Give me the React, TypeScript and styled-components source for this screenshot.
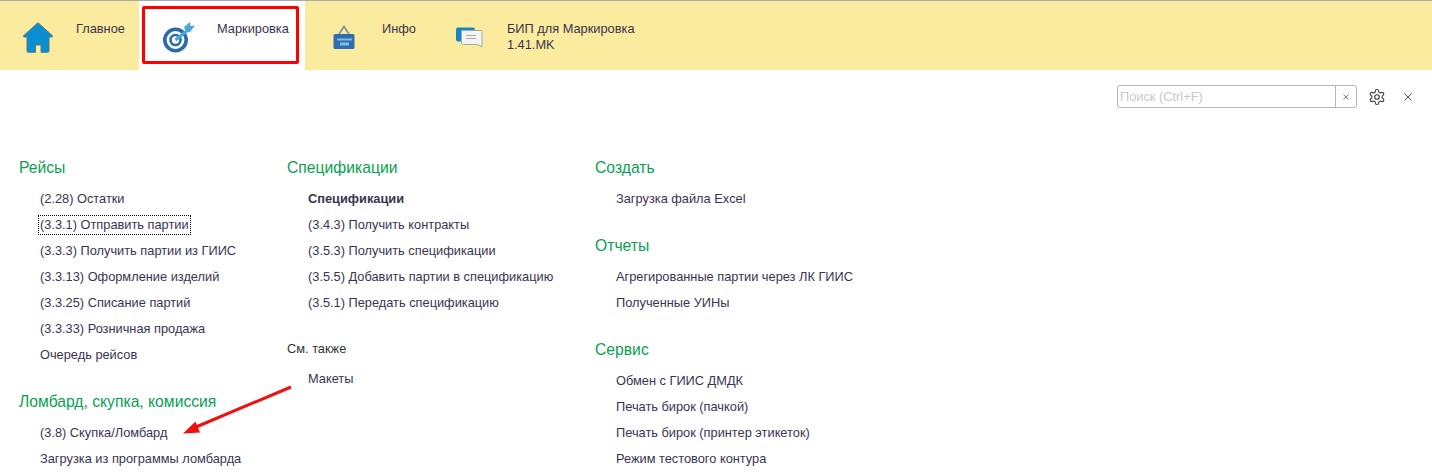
import React from "react";
import styled, { createGlobalStyle } from "styled-components";

const GlobalStyle = createGlobalStyle`
  html, body {
    margin: 0;
    padding: 0;
    background: #fff;
    overflow: hidden;
  }
  body {
    font-family: "Liberation Sans", Arial, sans-serif;
    font-size: 12.8px;
    color: #333;
  }
`;

const columns = [
  {
    width: 268,
    groups: [
      {
        title: "Рейсы",
        items: [
          { text: "(2.28) Остатки" },
          { text: "(3.3.1) Отправить партии", focused: true },
          { text: "(3.3.3) Получить партии из ГИИС" },
          { text: "(3.3.13) Оформление изделий" },
          { text: "(3.3.25) Списание партий" },
          { text: "(3.3.33) Розничная продажа" },
          { text: "Очередь рейсов" },
        ],
      },
      {
        title: "Ломбард, скупка, комиссия",
        items: [{ text: "(3.8) Скупка/Ломбард" }, { text: "Загрузка из программы ломбарда" }],
      },
    ],
  },
  {
    width: 308,
    groups: [
      {
        title: "Спецификации",
        items: [
          { text: "Спецификации", bold: true },
          { text: "(3.4.3) Получить контракты" },
          { text: "(3.5.3) Получить спецификации" },
          { text: "(3.5.5) Добавить партии в спецификацию" },
          { text: "(3.5.1) Передать спецификацию" },
        ],
      },
      { subtitle: "См. также", items: [{ text: "Макеты" }] },
    ],
  },
  {
    width: 400,
    groups: [
      { title: "Создать", items: [{ text: "Загрузка файла Excel" }] },
      {
        title: "Отчеты",
        items: [{ text: "Агрегированные партии через ЛК ГИИС" }, { text: "Полученные УИНы" }],
      },
      {
        title: "Сервис",
        items: [
          { text: "Обмен с ГИИС ДМДК" },
          { text: "Печать бирок (пачкой)" },
          { text: "Печать бирок (принтер этикеток)" },
          { text: "Режим тестового контура" },
        ],
      },
    ],
  },
];

function HomeIcon() {
  return (
    <svg width="30" height="31" viewBox="0 0 30 31">
      <path
        d="M15 0.7 L29.3 13.6 V15 H26 V29 Q26 30.3 24.6 30.3 H18 V23 H12.5 V30.3 H5.4 Q4 30.3 4 29 V15 H0.7 V13.6 Z"
        fill="#0a8ed0"
        stroke="#4f7d8c"
        strokeWidth="1"
        strokeLinejoin="round"
      />
    </svg>
  );
}

function TargetIcon() {
  return (
    <svg width="34" height="31" viewBox="0 0 34 31">
      <circle cx="13.5" cy="18" r="10.7" fill="#fff" stroke="#2d6aa8" strokeWidth="3.6" />
      <circle cx="13.5" cy="18" r="5" fill="#fff" stroke="#2d6aa8" strokeWidth="2.6" />
      <path d="M13.5 18 L26 8" stroke="#4aa8d8" strokeWidth="3" />
      <path d="M22 5 L28 0 L28.5 4 L33 3.5 L28 10 L24 10 Z" fill="#4aa8d8" />
    </svg>
  );
}

function BagIcon() {
  return (
    <svg width="22" height="24" viewBox="0 0 22 24">
      <path d="M6 9 L11 1.5 L16 9" fill="none" stroke="#7f8c9c" strokeWidth="1.6" />
      <rect x="0.5" y="9" width="21" height="15" rx="1.5" fill="#2f6cb0" />
      <rect x="4" y="13.5" width="15" height="2" fill="#7ec0e0" />
      <rect x="7" y="17.5" width="9" height="3" fill="#7ec0e0" />
    </svg>
  );
}

function ChatIcon() {
  return (
    <svg width="28" height="21" viewBox="0 0 28 21">
      <rect x="1" y="0.5" width="19" height="14" rx="2" fill="#1585c8" />
      <path
        d="M7.5 3.5 H26 Q27 3.5 27 4.5 V20 L23 17.5 H7.5 Q6.5 17.5 6.5 16.5 V4.5 Q6.5 3.5 7.5 3.5 Z"
        fill="#f4f4f2"
        stroke="#a9a9a0"
        strokeWidth="1"
      />
      <path d="M11 8.5 H21 M11 11.5 H21" stroke="#a9a9a9" strokeWidth="1.2" />
    </svg>
  );
}

function GearIcon() {
  return (
    <svg width="18" height="18" viewBox="0 0 24 24" fill="none" stroke="#444" strokeWidth="1.6" strokeLinejoin="round">
      <path d="M12.2 2h-.4a2 2 0 0 0-2 2v.2a2 2 0 0 1-1 1.7l-.4.3a2 2 0 0 1-2 0l-.2-.1a2 2 0 0 0-2.7.7l-.2.4a2 2 0 0 0 .7 2.7l.2.1a2 2 0 0 1 1 1.7v.5a2 2 0 0 1-1 1.8l-.2.1a2 2 0 0 0-.7 2.7l.2.4a2 2 0 0 0 2.7.7l.2-.1a2 2 0 0 1 2 0l.4.3a2 2 0 0 1 1 1.7v.2a2 2 0 0 0 2 2h.4a2 2 0 0 0 2-2v-.2a2 2 0 0 1 1-1.7l.4-.3a2 2 0 0 1 2 0l.2.1a2 2 0 0 0 2.7-.7l.2-.4a2 2 0 0 0-.7-2.7l-.2-.1a2 2 0 0 1-1-1.8v-.5a2 2 0 0 1 1-1.7l.2-.1a2 2 0 0 0 .7-2.7l-.2-.4a2 2 0 0 0-2.7-.7l-.2.1a2 2 0 0 1-2 0l-.4-.3a2 2 0 0 1-1-1.7V4a2 2 0 0 0-2-2z" />
      <circle cx="12" cy="12" r="3" />
    </svg>
  );
}

function CloseIcon({ size }: { size: number }) {
  return (
    <svg width={size} height={size} viewBox="0 0 8 8" stroke="#555" strokeWidth="1" fill="none">
      <path d="M0.5 0.5 L7.5 7.5 M7.5 0.5 L0.5 7.5" />
    </svg>
  );
}

export default function App() {
  return (
    <>
      <GlobalStyle />
      <Page>
        <TopBar>
          <Tab $width={139} $pad={23} $gap={23}>
            <TabIcon $top={1}>
              <HomeIcon />
            </TabIcon>
            <TabLabel>Главное</TabLabel>
          </Tab>
          <ActiveTab $width={166} $pad={23} $gap={21}>
            <TabIcon $top={1}>
              <TargetIcon />
            </TabIcon>
            <TabLabel>Маркировка</TabLabel>
            <Highlight />
          </ActiveTab>
          <Tab $pad={28} $gap={27}>
            <TabIcon $top={4}>
              <BagIcon />
            </TabIcon>
            <TabLabel>Инфо</TabLabel>
          </Tab>
          <Tab $pad={39} $gap={24}>
            <TabIcon $top={6}>
              <ChatIcon />
            </TabIcon>
            <TabLabel>
              БИП для Маркировка
              <br />
              1.41.MK
            </TabLabel>
          </Tab>
        </TopBar>
        <Tools>
          <SearchBox>
            <SearchText>Поиск (Ctrl+F)</SearchText>
            <SearchClear>
              <CloseIcon size={6} />
            </SearchClear>
          </SearchBox>
          <GearIcon />
          <WindowClose>
            <CloseIcon size={8} />
          </WindowClose>
        </Tools>
        <Columns>
          {columns.map((col, i) => (
            <Column key={i} $width={col.width}>
              {col.groups.map((g, j) => (
                <Group key={j}>
                  {g.title && <GroupTitle>{g.title}</GroupTitle>}
                  {g.subtitle && <SubTitle>{g.subtitle}</SubTitle>}
                  {g.items.map((it, k) => (
                    <Item key={k} $bold={"bold" in it && it.bold}>
                      {"focused" in it && it.focused ? <FocusedText>{it.text}</FocusedText> : it.text}
                    </Item>
                  ))}
                </Group>
              ))}
            </Column>
          ))}
        </Columns>
        <Arrow width="125" height="60" viewBox="0 0 125 60">
          <path d="M119 3 L24 43" stroke="#f01010" strokeWidth="3" />
          <path d="M11 49.5 L23.5 37.5 L28 48.5 Z" fill="#f01010" />
        </Arrow>
      </Page>
    </>
  );
}

const Page = styled.div`
  position: relative;
  width: 1432px;
  height: 475px;
  overflow: hidden;
  background: #fff;
`;

const TopBar = styled.div`
  display: flex;
  height: 69px;
  background: #fbeb9e;
  border-top: 1px solid #a9a9a9;
`;

const Tab = styled.div<{ $width?: number; $pad: number; $gap: number }>`
  display: flex;
  box-sizing: border-box;
  width: ${(p) => (p.$width ? `${p.$width}px` : "auto")};
  padding: 20px 0 0 ${(p) => p.$pad}px;
  gap: ${(p) => p.$gap}px;
`;

const ActiveTab = styled(Tab)`
  position: relative;
  background: #fff;
`;

const TabIcon = styled.div<{ $top: number }>`
  display: flex;
  align-items: flex-start;
  padding-top: ${(p) => p.$top}px;
`;

const TabLabel = styled.div`
  font-size: 12.8px;
  line-height: 16px;
  color: #3a3450;
`;

const Highlight = styled.div`
  position: absolute;
  left: 3px;
  top: 5px;
  width: 157px;
  height: 58px;
  border: 3px solid #f00;
  border-radius: 2px;
  box-sizing: border-box;
`;

const Tools = styled.div`
  display: flex;
  justify-content: flex-end;
  align-items: center;
  gap: 11px;
  height: 23px;
  padding: 15px 20px 0 0;
`;

const SearchBox = styled.div`
  display: flex;
  width: 240px;
  height: 23px;
  box-sizing: border-box;
  border: 1px solid #b5b5b5;
  border-radius: 3px;
`;

const SearchText = styled.div`
  flex: 1;
  padding-left: 2px;
  font-size: 12.8px;
  line-height: 21px;
  color: #c8c8c8;
`;

const SearchClear = styled.div`
  display: flex;
  align-items: center;
  justify-content: center;
  width: 20px;
  border-left: 1px solid #b5b5b5;
`;

const WindowClose = styled.div`
  display: flex;
  margin-left: 7px;
`;

const Columns = styled.div`
  display: flex;
  padding: 51px 0 0 19px;
`;

const Column = styled.div<{ $width: number }>`
  display: flex;
  flex-direction: column;
  width: ${(p) => p.$width}px;
  gap: 25px;
`;

const Group = styled.div`
  display: flex;
  flex-direction: column;
`;

const GroupTitle = styled.div`
  font-size: 15.7px;
  line-height: 18px;
  color: #0b9e52;
  margin-bottom: 9px;
`;

const SubTitle = styled.div`
  font-size: 12.8px;
  line-height: 16px;
  color: #333;
  margin-bottom: 9px;
`;

const Item = styled.div<{ $bold?: boolean }>`
  padding-left: 21px;
  height: 26px;
  font-size: 12.8px;
  line-height: 26px;
  font-weight: ${(p) => (p.$bold ? 700 : 400)};
  color: #3a3450;
  white-space: nowrap;
`;

const FocusedText = styled.span`
  display: inline-block;
  line-height: 18px;
  margin-left: -2px;
  padding: 0 1px;
  border: 1px dotted #000;
`;

const Arrow = styled.svg`
  position: absolute;
  left: 172px;
  top: 384px;
`;
